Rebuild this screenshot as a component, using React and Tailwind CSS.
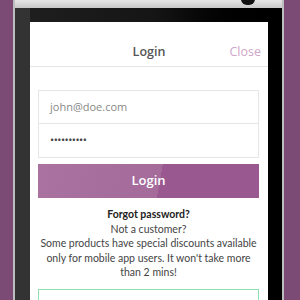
import React from 'react';

const App = () => {
  return (
    <div className="w-[300px] h-[300px] overflow-hidden bg-[#7b4a75] flex pl-[13px] pr-[16px] font-['Open_Sans',sans-serif]">
      {/* phone body */}
      <div className="flex-1 flex flex-col border-l-2 border-r-2 border-[#bdbdbd] bg-[#0a0a0a]">
        {/* top metal strip with camera */}
        <div className="h-[8px] shrink-0 bg-gradient-to-b from-[#e6e6e6] to-[#c8c8c8] relative">
          <div className="absolute left-[226px] top-[-7px] w-[14px] h-[12px] rounded-full bg-[#111]" />
        </div>
        <div className="flex-1 flex border-l-[15px] border-[#333333] pt-[14px] pr-[14px] bg-gradient-to-r from-[#1e1e1e] via-[#151515] to-[#000]">
          {/* screen */}
          <div className="flex-1 bg-white flex flex-col">
            <div className="h-[45px] shrink-0 border-b border-[#e6e6e6] flex items-center pt-[15px] pr-[7px] relative">
              <span className="absolute left-0 right-0 text-center text-[12.5px] font-semibold text-[#555] top-[20px] leading-[20px]">Login</span>
              <span className="ml-auto text-[12.5px] text-[#cfa6ca] leading-[20px]">Close</span>
            </div>
            <div className="px-[8px] pr-[9px] pt-[23px] flex flex-col">
              <div className="border border-[#e6e6e6] flex flex-col">
                <div className="h-[33px] border-b border-[#e6e6e6] flex items-center pl-[11px] text-[11px] text-[#888]">john@doe.com</div>
                <div className="h-[33px] flex items-center pl-[11px] text-[11px] text-[#444] tracking-[-0.5px]">••••••••••</div>
              </div>
              <div className="mt-[6px] h-[34px] flex items-center justify-center text-white text-[13px] font-semibold bg-[linear-gradient(100deg,#a9729f_0%,#a46b9b_55%,#9a5890_55%,#9a5890_100%)]">Login</div>
              <div className="mt-[9px] -mx-[4px] text-center text-[10.5px] leading-[14.5px] text-[#444] font-['Lato',sans-serif] whitespace-nowrap">
                <div className="font-bold text-[#222]">Forgot password?</div>
                <div>Not a customer?</div>
                <div>Some products have special discounts available</div>
                <div>only for mobile app users. It won't take more</div>
                <div>than 2 mins!</div>
              </div>
              <div className="mt-[9px] h-[34px] border border-[#8fe0b0]" />
            </div>
          </div>
        </div>
      </div>
    </div>
  );
};

export default App;
